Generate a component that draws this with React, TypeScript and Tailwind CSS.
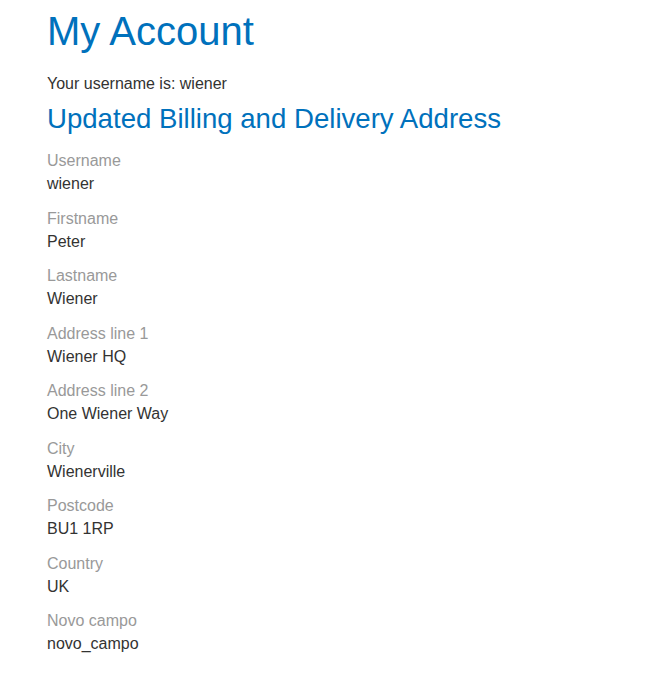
const fields = [
  { label: 'Username', value: 'wiener' },
  { label: 'Firstname', value: 'Peter' },
  { label: 'Lastname', value: 'Wiener' },
  { label: 'Address line 1', value: 'Wiener HQ' },
  { label: 'Address line 2', value: 'One Wiener Way' },
  { label: 'City', value: 'Wienerville' },
  { label: 'Postcode', value: 'BU1 1RP' },
  { label: 'Country', value: 'UK' },
  { label: 'Novo campo', value: 'novo_campo' },
]

export default function App() {
  return (
    <div className="min-h-screen bg-white px-[47px] font-['Liberation_Sans',Arial,sans-serif] text-[#333332]">
      <h1 className="pt-[8px] text-[40px] leading-[46px] text-[#0071bc]">My Account</h1>
      <p className="mt-[19px] text-[16px] leading-[22px]">Your username is: wiener</p>
      <h2 className="mt-[7px] text-[27.6px] leading-[34px] text-[#0071bc]">Updated Billing and Delivery Address</h2>
      <div className="mt-[13px] flex flex-col gap-[11.5px]">
        {fields.map((f) => (
          <div key={f.label} className="flex flex-col">
            <span className="text-[16px] leading-[23px] text-[#999999]">{f.label}</span>
            <span className="text-[16px] leading-[23px]">{f.value}</span>
          </div>
        ))}
      </div>
    </div>
  )
}
